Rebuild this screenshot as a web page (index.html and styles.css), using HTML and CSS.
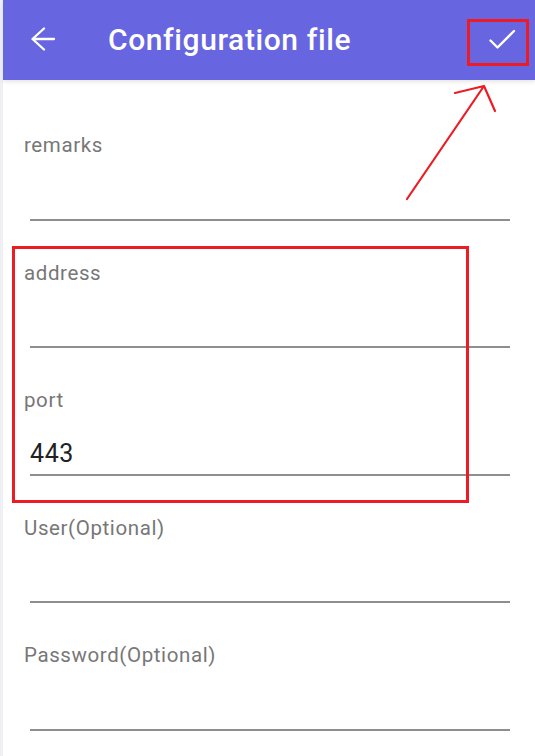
FILE: index.html
```html
<!DOCTYPE html>
<html lang="en">
<head>
<meta charset="utf-8">
<title>Configuration file</title>
<link rel="stylesheet" href="styles.css">
</head>
<body>
<div class="screen">
  <div class="strip"></div>
  <div class="main">
    <header class="appbar">
      <button class="icon-btn back" aria-label="Back">
        <svg width="26" height="26" viewBox="0 0 26 26"><path d="M24 12 H3 M14 1.5 L2.5 12 L14 22.5" fill="none" stroke="#fff" stroke-width="2.3" stroke-linecap="round" stroke-linejoin="round"/></svg>
      </button>
      <h1 class="title">Configuration file</h1>
      <button class="icon-btn check" aria-label="Save">
        <svg width="30" height="24" viewBox="0 0 30 24"><path d="M3.5 12.5 L10.5 19.5 L27 3" fill="none" stroke="#fff" stroke-width="2.4" stroke-linecap="round" stroke-linejoin="round"/></svg>
      </button>
    </header>
    <form class="form">
      <div class="field">
        <div class="label">remarks</div>
        <div class="input"></div>
      </div>
      <div class="field">
        <div class="label">address</div>
        <div class="input"></div>
      </div>
      <div class="field">
        <div class="label">port</div>
        <div class="input">443</div>
      </div>
      <div class="field">
        <div class="label">User(Optional)</div>
        <div class="input"></div>
      </div>
      <div class="field">
        <div class="label">Password(Optional)</div>
        <div class="input"></div>
      </div>
    </form>
  </div>
  <div class="mark mark-check"></div>
  <div class="mark mark-fields"></div>
  <svg class="mark-arrow" width="535" height="220" viewBox="0 0 535 220">
    <path d="M407 199 L484 86 M455 93 L484 86 L495 111" fill="none" stroke="#ed1c24" stroke-width="2.2" stroke-linecap="round" stroke-linejoin="round"/>
  </svg>
</div>
</body>
</html>
```

FILE: styles.css
```css
* { box-sizing: border-box; }
html, body { margin: 0; padding: 0; background: #fff; }
body {
  font-family: Roboto, "Noto Sans", "Liberation Sans", sans-serif;
  width: 535px;
  height: 756px;
  overflow: hidden;
}
.screen {
  position: relative;
  display: flex;
  width: 535px;
  height: 756px;
}
.strip {
  width: 3px;
  flex: 0 0 3px;
  background: #eef0f4;
}
.main {
  flex: 1;
  display: flex;
  flex-direction: column;
}
.appbar {
  height: 80px;
  background: #6865e0;
  display: flex;
  align-items: center;
  box-shadow: 0 2px 4px rgba(0,0,0,0.10);
  position: relative;
  z-index: 1;
}
.icon-btn {
  background: none;
  border: 0;
  padding: 0;
  display: flex;
  align-items: center;
  justify-content: center;
}
.back {
  margin-left: 26px;
  width: 28px;
  height: 28px;
  margin-top: -1px;
}
.title {
  margin: 0 0 0 51px;
  font-size: 30px;
  font-weight: 500;
  color: #fff;
  letter-spacing: 0.6px;
  flex: 1;
  margin-top: -2px;
}
.check {
  width: 32px;
  height: 28px;
  margin-right: 17px;
  margin-top: -1px;
}
.form {
  padding-top: 13px;
  display: flex;
  flex-direction: column;
}
.field {
  padding-top: 40px;
}
.label {
  margin-left: 21px;
  font-size: 20.5px;
  line-height: 24px;
  color: #777;
  letter-spacing: 0.6px;
}
.input {
  margin: 0 25px 0 27px;
  height: 63.5px;
  border-bottom: 2px solid #8e8e8e;
  display: flex;
  align-items: flex-end;
  padding-bottom: 6px;
  font-size: 25px;
  color: #222;
  letter-spacing: 0.6px;
}
.mark {
  position: absolute;
  border: 3px solid #ed1c24;
  z-index: 2;
}
.mark-check {
  left: 467px;
  top: 19px;
  width: 62px;
  height: 47px;
}
.mark-fields {
  left: 12px;
  top: 246px;
  width: 457px;
  height: 257px;
}
.mark-arrow {
  position: absolute;
  left: 0;
  top: 0;
  z-index: 2;
}
```
